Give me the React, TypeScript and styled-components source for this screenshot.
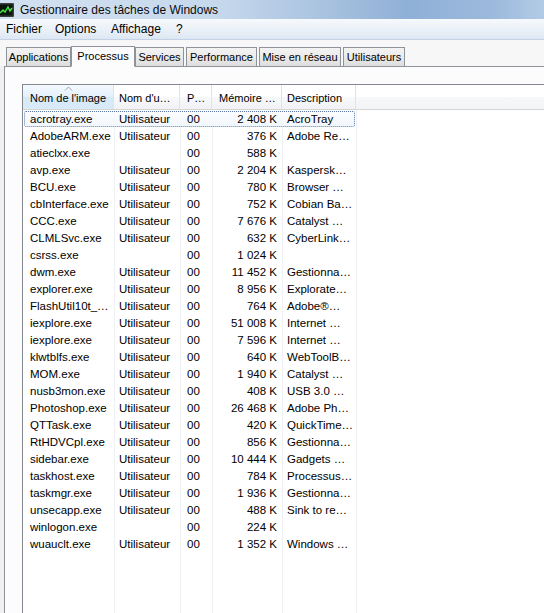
import React from "react";
import styled, { createGlobalStyle } from "styled-components";

type Proc = {
  name: string;
  user: string;
  cpu: string;
  mem: string;
  desc: string;
};

const procs: Proc[] = [
  { name: "acrotray.exe", user: "Utilisateur", cpu: "00", mem: "2 408 K", desc: "AcroTray" },
  { name: "AdobeARM.exe", user: "Utilisateur", cpu: "00", mem: "376 K", desc: "Adobe Re…" },
  { name: "atieclxx.exe", user: "", cpu: "00", mem: "588 K", desc: "" },
  { name: "avp.exe", user: "Utilisateur", cpu: "00", mem: "2 204 K", desc: "Kaspersk…" },
  { name: "BCU.exe", user: "Utilisateur", cpu: "00", mem: "780 K", desc: "Browser …" },
  { name: "cbInterface.exe", user: "Utilisateur", cpu: "00", mem: "752 K", desc: "Cobian Ba…" },
  { name: "CCC.exe", user: "Utilisateur", cpu: "00", mem: "7 676 K", desc: "Catalyst …" },
  { name: "CLMLSvc.exe", user: "Utilisateur", cpu: "00", mem: "632 K", desc: "CyberLink…" },
  { name: "csrss.exe", user: "", cpu: "00", mem: "1 024 K", desc: "" },
  { name: "dwm.exe", user: "Utilisateur", cpu: "00", mem: "11 452 K", desc: "Gestionna…" },
  { name: "explorer.exe", user: "Utilisateur", cpu: "00", mem: "8 956 K", desc: "Explorate…" },
  { name: "FlashUtil10t_…", user: "Utilisateur", cpu: "00", mem: "764 K", desc: "Adobe®…" },
  { name: "iexplore.exe", user: "Utilisateur", cpu: "00", mem: "51 008 K", desc: "Internet …" },
  { name: "iexplore.exe", user: "Utilisateur", cpu: "00", mem: "7 596 K", desc: "Internet …" },
  { name: "klwtblfs.exe", user: "Utilisateur", cpu: "00", mem: "640 K", desc: "WebToolB…" },
  { name: "MOM.exe", user: "Utilisateur", cpu: "00", mem: "1 940 K", desc: "Catalyst …" },
  { name: "nusb3mon.exe", user: "Utilisateur", cpu: "00", mem: "408 K", desc: "USB 3.0 …" },
  { name: "Photoshop.exe", user: "Utilisateur", cpu: "00", mem: "26 468 K", desc: "Adobe Ph…" },
  { name: "QTTask.exe", user: "Utilisateur", cpu: "00", mem: "420 K", desc: "QuickTime…" },
  { name: "RtHDVCpl.exe", user: "Utilisateur", cpu: "00", mem: "856 K", desc: "Gestionna…" },
  { name: "sidebar.exe", user: "Utilisateur", cpu: "00", mem: "10 444 K", desc: "Gadgets …" },
  { name: "taskhost.exe", user: "Utilisateur", cpu: "00", mem: "784 K", desc: "Processus…" },
  { name: "taskmgr.exe", user: "Utilisateur", cpu: "00", mem: "1 936 K", desc: "Gestionna…" },
  { name: "unsecapp.exe", user: "Utilisateur", cpu: "00", mem: "488 K", desc: "Sink to re…" },
  { name: "winlogon.exe", user: "", cpu: "00", mem: "224 K", desc: "" },
  { name: "wuauclt.exe", user: "Utilisateur", cpu: "00", mem: "1 352 K", desc: "Windows …" },
];

const tabs = [
  { label: "Applications", w: 65 },
  { label: "Processus", w: 64 },
  { label: "Services", w: 49 },
  { label: "Performance", w: 71 },
  { label: "Mise en réseau", w: 82 },
  { label: "Utilisateurs", w: 62 },
];
const menus = [
  { label: "Fichier", w: 49 },
  { label: "Options", w: 56 },
  { label: "Affichage", w: 65 },
  { label: "?", w: 12 },
];

// column widths: image, user, cpu, memory, description
const cols = "91px 66px 32px 70px 74px";

const GlobalStyle = createGlobalStyle`
  html, body {
    margin: 0;
    padding: 0;
    background: #f0f0f0;
    overflow: hidden;
  }
  body {
    font-family: "Liberation Sans", Arial, sans-serif;
    font-size: 11px;
    color: #000;
  }
`;

const Window = styled.div`
  width: 544px;
  height: 613px;
  display: flex;
  flex-direction: column;
  overflow: hidden;
`;

const TitleBar = styled.div`
  height: 19px;
  display: flex;
  align-items: center;
  gap: 6px;
  background: linear-gradient(90deg, #d2e1f1 0%, #c6d8ec 40%, #a8c2df 60%, #8fb0d6 75%, #9bb9dc 90%, #b2cae6 100%);
  font-size: 12px;
  color: #0b0b0b;
  white-space: nowrap;
`;

const TitleIcon = styled.svg`
  margin-left: -2px;
  flex: none;
`;

const MenuBar = styled.div`
  height: 20px;
  display: flex;
  align-items: center;
  padding-left: 6px;
  background: linear-gradient(180deg, #f6f9fc 0%, #eaf0f7 55%, #dde7f3 100%);
  border-bottom: 1px solid #c3d2e4;
  font-size: 12px;
`;

const MenuItem = styled.span<{ $w: number }>`
  width: ${(p) => p.$w}px;
`;

const TabStrip = styled.div`
  height: 26px;
  display: flex;
  align-items: flex-end;
  padding-left: 6px;
  background: #f7f7f7;
`;

const Tab = styled.div<{ $active?: boolean; $w: number }>`
  width: ${(p) => p.$w}px;
  height: ${(p) => (p.$active ? 21 : 19)}px;
  margin-right: ${(p) => (p.$active ? 0 : 2)}px;
  margin-left: ${(p) => (p.$active ? -2 : 0)}px;
  margin-bottom: ${(p) => (p.$active ? -1 : 0)}px;
  display: flex;
  justify-content: center;
  align-items: ${(p) => (p.$active ? "flex-start" : "center")};
  padding-top: ${(p) => (p.$active ? 3 : 0)}px;
  box-sizing: border-box;
  border: 1px solid #8e9299;
  border-bottom: ${(p) => (p.$active ? "1px solid #fcfcfc" : "none")};
  background: ${(p) =>
    p.$active ? "#fcfcfc" : "linear-gradient(180deg, #f3f3f3 0%, #ebebeb 50%, #dddddd 100%)"};
  font-size: 11px;
  position: relative;
  z-index: ${(p) => (p.$active ? 2 : 1)};
  white-space: nowrap;
`;

const Panel = styled.div`
  flex: 1;
  margin-left: 4px;
  background: #fcfcfc;
  border-top: 1px solid #8e9299;
  border-left: 1px solid #8e9299;
  padding: 17px 0 0 17px;
  display: flex;
`;

const ListView = styled.div`
  flex: 1;
  background: #fff;
  border-top: 1px solid #828790;
  border-left: 1px solid #828790;
  display: flex;
  flex-direction: column;
`;

const HeaderRow = styled.div`
  display: grid;
  grid-template-columns: ${cols} 1fr;
  height: 24px;
  border-bottom: 1px solid #d5d5d5;
`;

const HeaderCell = styled.div<{ $sorted?: boolean; $filler?: boolean; $pad?: number }>`
  position: relative;
  display: flex;
  align-items: center;
  padding-left: ${(p) => p.$pad ?? 5}px;
  padding-top: 2px;
  font-size: 11px;
  white-space: nowrap;
  overflow: hidden;
  border-right: ${(p) => (p.$filler ? "none" : "1px solid #dfe3e8")};
  background: ${(p) =>
    p.$filler
      ? "linear-gradient(180deg, #ffffff 0%, #ffffff 50%, #f7f8fa 51%, #f3f4f6 100%)"
      : p.$sorted
      ? "linear-gradient(180deg, #f4f9fe 0%, #e3f0fb 50%, #d6e9f8 51%, #d9ebf9 100%)"
      : "linear-gradient(180deg, #ffffff 0%, #ffffff 50%, #f7f8fa 51%, #f1f2f4 100%)"};
`;

const SortArrow = styled.svg`
  position: absolute;
  top: 1px;
  left: 41px;
`;

const Body = styled.div`
  flex: 1;
  position: relative;
  display: grid;
  grid-template-columns: ${cols} 1fr;
  grid-auto-rows: 17px;
  align-content: start;
`;

const ColLine = styled.div<{ $x: number }>`
  position: absolute;
  top: 0;
  bottom: 0;
  left: ${(p) => p.$x}px;
  width: 1px;
  background: #eef0f6;
`;

const Row = styled.div`
  display: contents;
`;

const Cell = styled.div<{ $right?: boolean; $pad: number }>`
  display: flex;
  align-items: center;
  justify-content: ${(p) => (p.$right ? "flex-end" : "flex-start")};
  padding: ${(p) => (p.$right ? `0 ${p.$pad}px 0 0` : `0 0 0 ${p.$pad}px`)};
  white-space: nowrap;
  overflow: hidden;
  font-size: 11.5px;
  position: relative;
  z-index: 1;
`;

const FocusBox = styled.div`
  position: absolute;
  top: 1px;
  left: 1px;
  width: 331px;
  height: 16px;
  box-sizing: border-box;
  border: 1px dotted #5b7ba6;
  border-radius: 2px;
  background: linear-gradient(180deg, #fbfdff 0%, #f2f7fd 100%);
`;

const App = () => {
  const colEdges = [91, 157, 189, 259, 333];
  return (
    <Window>
      <GlobalStyle />
      <TitleBar>
        <TitleIcon width="16" height="14" viewBox="0 0 16 14">
          <rect x="0" y="0" width="16" height="14" rx="1" fill="#3a3f3a" />
          <rect x="1.5" y="1.5" width="13" height="11" fill="#0c150c" />
          <polyline points="2,10 5,7 7,9 10,4 12,8 14,5" fill="none" stroke="#3ee63e" strokeWidth="1.4" />
        </TitleIcon>
        <span>Gestionnaire des tâches de Windows</span>
      </TitleBar>
      <MenuBar>
        {menus.map((m) => (
          <MenuItem key={m.label} $w={m.w}>
            {m.label}
          </MenuItem>
        ))}
      </MenuBar>
      <TabStrip>
        {tabs.map((t) => (
          <Tab key={t.label} $w={t.w} $active={t.label === "Processus"}>
            {t.label}
          </Tab>
        ))}
      </TabStrip>
      <Panel>
        <ListView>
          <HeaderRow>
            <HeaderCell $sorted $pad={7}>
              <SortArrow width="9" height="5" viewBox="0 0 9 5">
                <polyline points="1,4.5 4.5,1 8,4.5" fill="none" stroke="#97a5b8" strokeWidth="1" />
              </SortArrow>
              Nom de l'image
            </HeaderCell>
            <HeaderCell>Nom d'u…</HeaderCell>
            <HeaderCell $pad={7}>P…</HeaderCell>
            <HeaderCell $pad={7}>Mémoire …</HeaderCell>
            <HeaderCell>Description</HeaderCell>
            <HeaderCell $filler />
          </HeaderRow>
          <Body>
            {colEdges.map((x) => (
              <ColLine key={x} $x={x} />
            ))}
            <FocusBox />
            {procs.map((p, i) => (
              <Row key={i}>
                <Cell $pad={7}>{p.name}</Cell>
                <Cell $pad={5}>{p.user}</Cell>
                <Cell $pad={7}>{p.cpu}</Cell>
                <Cell $pad={5} $right>
                  {p.mem}
                </Cell>
                <Cell $pad={5}>{p.desc}</Cell>
                <Cell $pad={0} />
              </Row>
            ))}
          </Body>
        </ListView>
      </Panel>
    </Window>
  );
};

export default App;
